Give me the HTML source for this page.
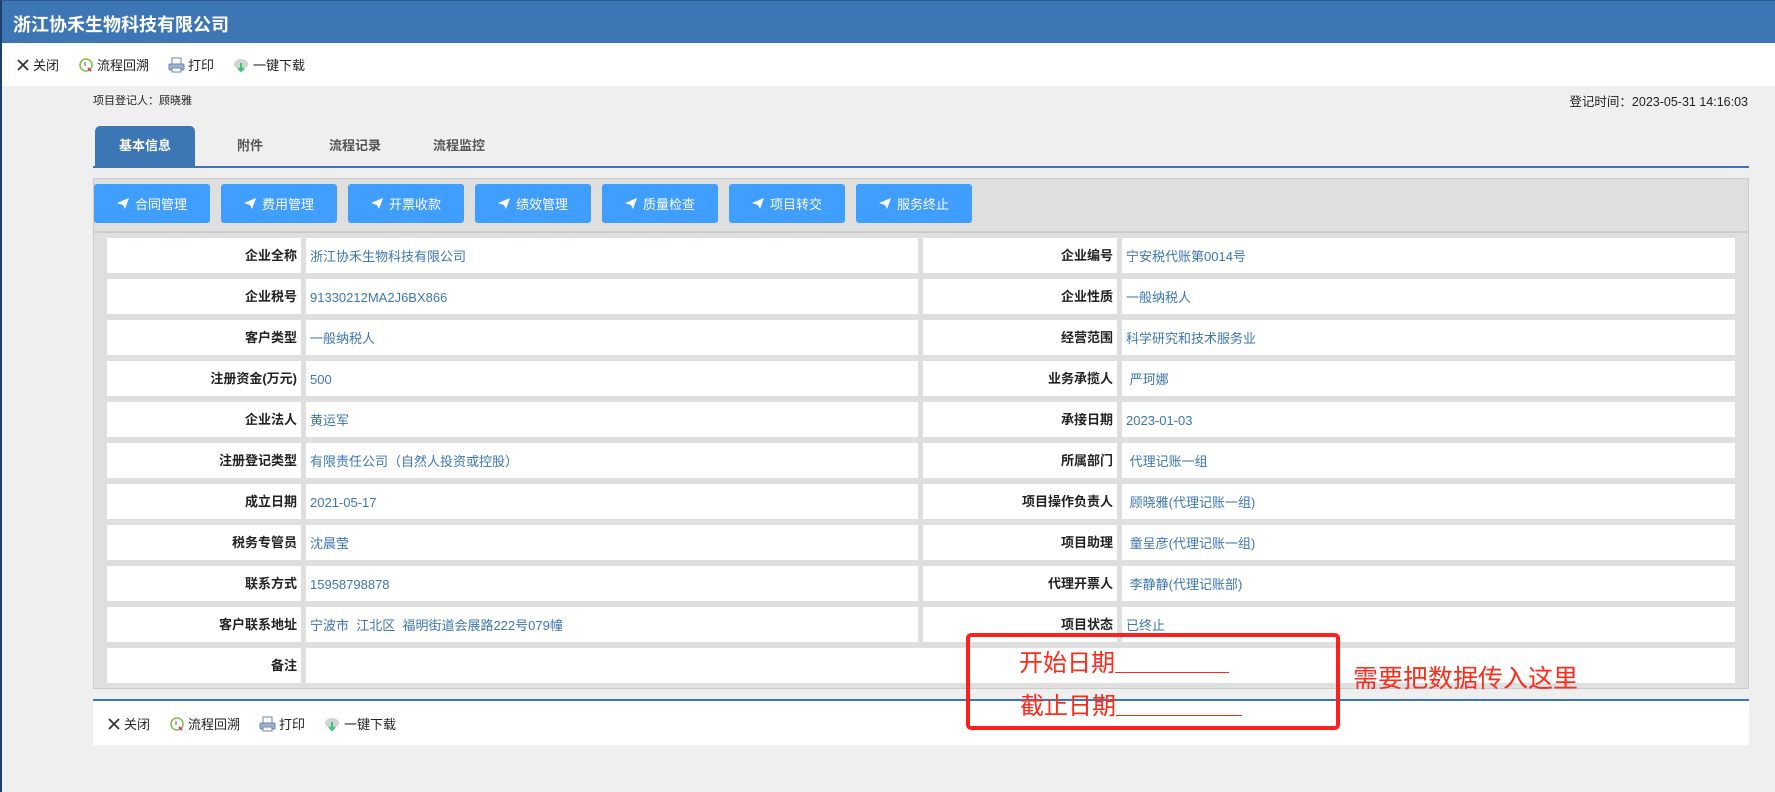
<!DOCTYPE html>
<html><head><meta charset="utf-8">
<style>
*{margin:0;padding:0;box-sizing:border-box}
body{width:1775px;height:792px;overflow:hidden;background:#efefef;font-family:"Liberation Sans","Noto Sans CJK SC",sans-serif;font-size:13px;color:#222;position:relative}
.a{position:absolute}
.hdr{left:0;top:0;width:1775px;height:43px;background:#3c76b4;border-left:2px solid #1d3f6e;border-top:1px solid #2c5a90}
.hdr span{position:absolute;left:11px;top:10px;color:#fff;font-size:18px;font-weight:bold}
.tb{left:0;top:43px;width:1775px;height:43px;background:#fff;border-left:2px solid #1d3f6e}
.lb{left:0;top:86px;width:2px;height:706px;background:#1d3f6e}
.ti{display:inline-flex;align-items:center;gap:3px;margin-right:19px;font-size:13px;color:#222}
.tab{top:126px;height:40px;font-size:13px;font-weight:bold;color:#555;text-align:center;line-height:40px}
.btn{top:184px;width:116px;height:39px;background:#409eff;border-radius:3px;color:#fff;font-size:13px;display:flex;align-items:center;justify-content:center;gap:6px}
.c{background:#fff;height:35px;top:0}
.l{font-weight:bold;text-align:right;padding-right:4px;line-height:35px}
.v{color:#3c76b4;padding-left:4px;line-height:37px}
.red{color:#ff2a1a;font-size:24px}
</style></head><body>
<div class="a hdr"><span>浙江协禾生物科技有限公司</span></div>
<div class="a tb"><div style="position:absolute;left:14px;top:12px;display:flex">
<span class="ti"><svg width="14" height="14"><path d="M2 2L12 12M12 2L2 12" stroke="#333" stroke-width="1.8"/></svg>关闭</span>
<span class="ti"><svg width="16" height="16"><circle cx="8" cy="8" r="6" fill="none" stroke="#7bc043" stroke-width="1.5"/><path d="M7 5v4" stroke="#555"/><path d="M10 11l3 3" stroke="#e0307a" stroke-width="2"/></svg>流程回溯</span>
<span class="ti"><svg width="17" height="16"><rect x="4" y="1" width="9" height="6" fill="#fff" stroke="#6b86a8"/><rect x="1" y="7" width="15" height="6" rx="1" fill="#9fb3cc" stroke="#6b86a8"/><rect x="4" y="11" width="9" height="4" fill="#fff" stroke="#6b86a8"/></svg>打印</span>
<span class="ti"><svg width="17" height="16"><ellipse cx="8" cy="7" rx="7" ry="5" fill="#cfd6d2"/><path d="M8 6v8M5 11l3 3 3-3" stroke="#3cc47a" stroke-width="2" fill="none"/></svg>一键下载</span>
</div></div>
<div class="a lb"></div>
<div class="a" style="left:93px;top:92px;font-size:11px">项目登记人：顾晓雅</div>
<div class="a" style="right:27px;top:91px;font-size:12.5px">登记时间：2023-05-31 14:16:03</div>
<div class="a tab" style="left:95px;width:100px;background:#3c76b4;color:#fff;border-radius:5px 5px 0 0">基本信息</div>
<div class="a tab" style="left:205px;width:90px">附件</div>
<div class="a tab" style="left:310px;width:90px">流程记录</div>
<div class="a tab" style="left:414px;width:90px">流程监控</div>
<div class="a" style="left:93px;top:166px;width:1656px;height:2px;background:#3c76b4"></div>
<div class="a" style="left:93px;top:178px;width:1656px;height:511px;background:#dfdfdf;border:1px solid #ccc"></div>
<div class="a" style="left:94px;top:231px;width:1654px;height:2px;background:#ccc"></div>
<div class="a btn" style="left:94px"><svg width="12" height="11"><path d="M0 5L12 0 8 11 6 7z" fill="#fff"/></svg>合同管理</div>
<div class="a btn" style="left:221px"><svg width="12" height="11"><path d="M0 5L12 0 8 11 6 7z" fill="#fff"/></svg>费用管理</div>
<div class="a btn" style="left:348px"><svg width="12" height="11"><path d="M0 5L12 0 8 11 6 7z" fill="#fff"/></svg>开票收款</div>
<div class="a btn" style="left:475px"><svg width="12" height="11"><path d="M0 5L12 0 8 11 6 7z" fill="#fff"/></svg>绩效管理</div>
<div class="a btn" style="left:602px"><svg width="12" height="11"><path d="M0 5L12 0 8 11 6 7z" fill="#fff"/></svg>质量检查</div>
<div class="a btn" style="left:729px"><svg width="12" height="11"><path d="M0 5L12 0 8 11 6 7z" fill="#fff"/></svg>项目转交</div>
<div class="a btn" style="left:856px"><svg width="12" height="11"><path d="M0 5L12 0 8 11 6 7z" fill="#fff"/></svg>服务终止</div>
<div id="rows"></div>
<script>
var d=[["企业全称","浙江协禾生物科技有限公司","企业编号","宁安税代账第0014号"],
["企业税号","91330212MA2J6BX866","企业性质","一般纳税人"],
["客户类型","一般纳税人","经营范围","科学研究和技术服务业"],
["注册资金(万元)","500","业务承揽人"," 严珂娜"],
["企业法人","黄运军","承接日期","2023-01-03"],
["注册登记类型","有限责任公司（自然人投资或控股）","所属部门"," 代理记账一组"],
["成立日期","2021-05-17","项目操作负责人"," 顾晓雅(代理记账一组)"],
["税务专管员","沈晨莹","项目助理"," 童呈彦(代理记账一组)"],
["联系方式","15958798878","代理开票人"," 李静静(代理记账部)"],
["客户联系地址","宁波市  江北区  福明街道会展路222号079幢","项目状态","已终止"]];
var h="";
for(var i=0;i<d.length;i++){var y=238+i*41;var r=d[i];
h+='<div class="a c l" style="top:'+y+'px;left:107px;width:194px">'+r[0]+'</div>';
h+='<div class="a c v" style="top:'+y+'px;left:306px;width:612px;white-space:pre">'+r[1]+'</div>';
h+='<div class="a c l" style="top:'+y+'px;left:923px;width:194px">'+r[2]+'</div>';
h+='<div class="a c v" style="top:'+y+'px;left:1122px;width:613px;white-space:pre">'+r[3]+'</div>';}
var y=238+10*41;
h+='<div class="a c l" style="top:'+y+'px;left:107px;width:194px">备注</div>';
h+='<div class="a c" style="top:'+y+'px;left:306px;width:1429px"></div>';
document.getElementById("rows").innerHTML=h;
</script>
<div class="a" style="left:93px;top:699px;width:1656px;height:2px;background:#3c76b4"></div>
<div class="a" style="left:93px;top:701px;width:1656px;height:44px;background:#fff"><div style="position:absolute;left:14px;top:13px;display:flex">
<span class="ti"><svg width="14" height="14"><path d="M2 2L12 12M12 2L2 12" stroke="#333" stroke-width="1.8"/></svg>关闭</span>
<span class="ti"><svg width="16" height="16"><circle cx="8" cy="8" r="6" fill="none" stroke="#7bc043" stroke-width="1.5"/><path d="M7 5v4" stroke="#555"/><path d="M10 11l3 3" stroke="#e0307a" stroke-width="2"/></svg>流程回溯</span>
<span class="ti"><svg width="17" height="16"><rect x="4" y="1" width="9" height="6" fill="#fff" stroke="#6b86a8"/><rect x="1" y="7" width="15" height="6" rx="1" fill="#9fb3cc" stroke="#6b86a8"/><rect x="4" y="11" width="9" height="4" fill="#fff" stroke="#6b86a8"/></svg>打印</span>
<span class="ti"><svg width="17" height="16"><ellipse cx="8" cy="7" rx="7" ry="5" fill="#cfd6d2"/><path d="M8 6v8M5 11l3 3 3-3" stroke="#3cc47a" stroke-width="2" fill="none"/></svg>一键下载</span>
</div></div>
<div class="a" style="left:966px;top:633px;width:374px;height:97px;border:4px solid #ff1f1f;border-radius:5px"></div>
<div class="a red" style="left:1019px;top:643px">开始日期<span style="display:inline-block;width:114px;border-bottom:1px solid #ff2a1a;height:30px;vertical-align:top"></span></div>
<div class="a red" style="left:1020px;top:686px">截止日期<span style="display:inline-block;width:126px;border-bottom:1px solid #ff2a1a;height:30px;vertical-align:top"></span></div>
<div class="a red" style="left:1353px;top:659px;font-size:25px">需要把数据传入这里</div>
</body></html>
